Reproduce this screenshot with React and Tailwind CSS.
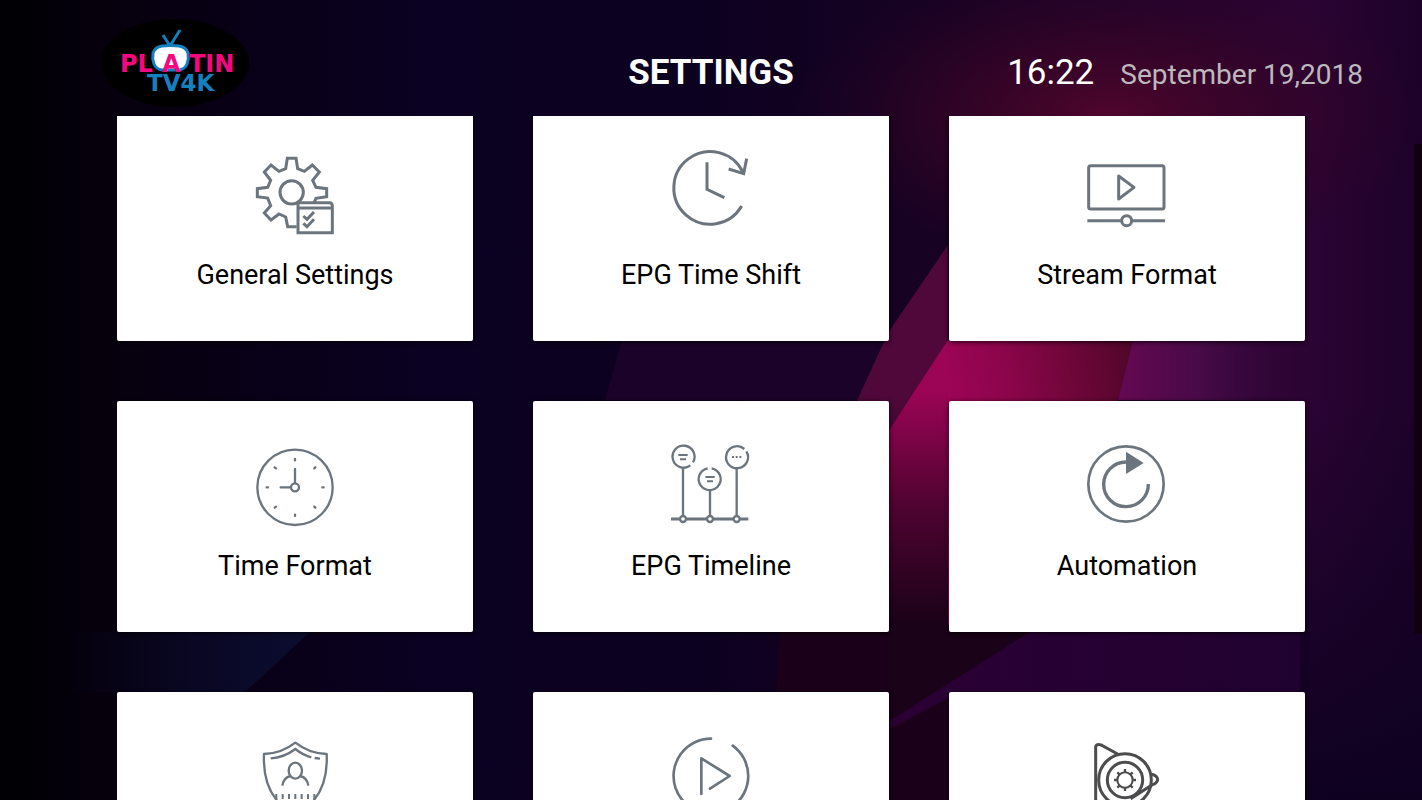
import React from 'react';

const GeneralIcon = () => (
  <>
    <path d="M222 188 L228 175 L260 170 V146 L228 142 L218 121 L238 96 L217 75 L193 94 L173 86 L168 55 H142 L137 86 L117 94 L93 75 L73 96 L92 121 L83 142 L52 146 V170 L83 174 L92 197 L73 219 L93 240 L117 222 L137 231 L143 260 H170" />
    <circle cx="155" cy="157" r="35" />
    <path d="M174 278 V188 H268 Q277 188 277 198 V278 Z M174 204 H277" fill="#fff" />
    <path d="M190 228 L201 238 L222 216 M190 250 L201 260 L222 238" />
  </>
);

const TimeShiftIcon = () => (
  <>
    <path d="M264 112 A109 109 0 1 0 260 213" />
    <path d="M221 102 L266 116 L275 71" />
    <path d="M156 82 V163 L208 188" />
  </>
);

const StreamIcon = () => (
  <>
    <rect x="56" y="77" width="226" height="130" rx="6" />
    <path d="M146 108 V177 L192 142 Z" strokeLinejoin="round" />
    <path d="M52 242 H153 M186 242 H285" />
    <circle cx="170" cy="242" r="15" />
  </>
);

const ClockIcon = () => (
  <>
    <circle cx="165" cy="157" r="113" strokeWidth="7" />
    <circle cx="165" cy="157" r="12" strokeWidth="7" />
    <path
      strokeWidth="7"
      strokeLinecap="round"
      d="M165 102 V144 M122 157 H152 M165 72 V76 M165 239 V243 M80 157 H84 M247 157 H251 M104 97 L108 100 M223 100 L226 97 M104 218 L108 215 M223 215 L226 218"
    />
  </>
);

const TimelineIcon = () => (
  <>
    <path strokeWidth="7" d="M114 97 A33 33 0 1 0 106 106" />
    <path strokeWidth="7" d="M170 115 A33 33 0 1 1 158 115" />
    <path strokeWidth="7" d="M268 57 A33 33 0 1 0 274 64" />
    <path strokeWidth="7" d="M84 114 V257 M165 181 V257 M245 114 V257" />
    <path d="M48 267 H74 M94 267 H155 M175 267 H235 M255 267 H280" />
    <circle cx="84" cy="267" r="9" strokeWidth="7" />
    <circle cx="165" cy="267" r="9" strokeWidth="7" />
    <circle cx="245" cy="267" r="9" strokeWidth="7" />
    <path strokeWidth="6" d="M70 75 H98 M75 88 H93 M151 141 H179 M156 154 H174" />
    <path strokeWidth="6" d="M231 81 H237 M242 81 H248 M253 81 H259" />
  </>
);

const AutomationIcon = () => (
  <>
    <circle cx="168" cy="162" r="113" strokeWidth="8" />
    <path strokeWidth="10" d="M235 162 A67 67 0 1 1 168 96" />
    <path d="M168 65 L221 99 L168 132 Z" fill="currentColor" stroke="none" />
  </>
);

const ParentalIcon = () => (
  <>
    <path
      strokeWidth="7"
      strokeLinejoin="round"
      d="M166 68 Q208 101 260 102 Q264 190 222 240 Q200 265 166 280 Q132 265 110 240 Q68 190 72 102 Q124 101 166 68 Z"
    />
    <path strokeWidth="7" d="M92 115 Q132 113 166 87 Q187 104 214 112 M224 114 L240 116" />
    <ellipse cx="166" cy="152" rx="20" ry="24" strokeWidth="7" />
    <path strokeWidth="7" d="M127 197 Q130 173 152 168 M180 168 Q202 173 205 197" />
    <path strokeWidth="6" d="M109 222 V237 M128 222 V237 M147 222 V237 M166 222 V237 M185 222 V237 M204 222 V237 M223 222 V237" />
  </>
);

const PlayerIcon = () => (
  <g strokeLinecap="round" strokeWidth="8">
    <path d="M168 56 A112 112 0 1 0 233 77" />
    <path d="M139 222 V115 L224 168 L165 206" strokeLinejoin="round" />
  </g>
);

const ExternalPlayerIcon = () => (
  <g className="text-[#4c4c4e]" stroke="currentColor">
    <path d="M77 290 V80 Q80 71 93 75 L143 102" />
    <circle cx="165" cy="180" r="79" />
    <circle cx="165" cy="180" r="53" />
    <circle cx="165" cy="180" r="23" strokeWidth="6" />
    <path
      strokeWidth="7"
      d="M165 157 V147 M165 203 V213 M142 180 H132 M188 180 H198 M149 164 L142 157 M181 164 L188 157 M149 196 L142 203 M181 196 L188 203"
    />
    <path d="M243 163 Q262 166 263 179 Q261 190 247 194 L182 236" />
  </g>
);

const tiles = [
  { id: 'general', label: 'General Settings', viewBox: '0 0 330 330', Icon: GeneralIcon },
  { id: 'shift', label: 'EPG Time Shift', viewBox: '3 15 330 330', Icon: TimeShiftIcon },
  { id: 'stream', label: 'Stream Format', viewBox: '6 0 330 330', Icon: StreamIcon },
  { id: 'time', label: 'Time Format', viewBox: '0 -12 330 330', Icon: ClockIcon },
  { id: 'timeline', label: 'EPG Timeline', viewBox: '3 3 330 330', Icon: TimelineIcon },
  { id: 'automation', label: 'Automation', viewBox: '6 3 330 330', Icon: AutomationIcon },
  { id: 'parental', ariaLabel: 'Parental Control', viewBox: '0 6 330 330', Icon: ParentalIcon },
  { id: 'player', ariaLabel: 'Player Selection', viewBox: '3 6 330 330', Icon: PlayerIcon },
  { id: 'external', ariaLabel: 'External Players', viewBox: '6 6 330 330', Icon: ExternalPlayerIcon },
];

function Logo() {
  return (
    <svg viewBox="10 9 150 88" className="ml-[41px] h-[88px] w-[150px]" role="img" aria-label="Platin TV4K">
      <ellipse cx="85" cy="53" rx="74" ry="44" fill="#000" />
      <path d="M73 25 L80 36 L90 20" fill="none" stroke="#1580c0" strokeWidth="3" />
      <path d="M72 36 Q80 35 89 36 Q96 37 98 43 Q99 49 97 54 Q95 59 89 60 H72 Q66 59 64 54 Q62 49 63 43 Q65 37 72 36 Z" fill="#fff" stroke="#1580c0" strokeWidth="3" />
      <g fontFamily="DejaVu Sans, sans-serif" fontWeight="700" fontSize="24">
        <g fill="#f5087f">
          <text x="30" y="62">PL</text>
          <text x="72" y="62">A</text>
          <text x="99" y="62">TIN</text>
        </g>
        <text x="57" y="81" fontSize="23" fill="#1580c0">TV4K</text>
      </g>
    </svg>
  );
}

function Backdrop() {
  return (
    <svg
      viewBox="0 0 1422 800"
      preserveAspectRatio="none"
      aria-hidden="true"
      className="absolute inset-0 -z-10 h-full w-full"
    >
      <defs>
        <linearGradient id="base">
          <stop offset="0" stopColor="#000003" />
          <stop offset="0.08" stopColor="#06000e" />
          <stop offset="0.3" stopColor="#0b0122" />
          <stop offset="0.5" stopColor="#0d0120" />
          <stop offset="0.68" stopColor="#190224" />
          <stop offset="0.92" stopColor="#2b0433" />
          <stop offset="1" stopColor="#1c0229" />
        </linearGradient>
        <linearGradient id="beam" gradientUnits="userSpaceOnUse" x1="950" y1="380" x2="1130" y2="350">
          <stop offset="0" stopColor="#9c0455" />
          <stop offset="0.3" stopColor="#8c054b" />
          <stop offset="0.65" stopColor="#70063a" />
          <stop offset="1" stopColor="#52062a" />
        </linearGradient>
        <linearGradient id="fade" gradientUnits="userSpaceOnUse" x1="0" y1="390" x2="0" y2="625">
          <stop offset="0" stopColor="#1a0218" stopOpacity="0" />
          <stop offset="0.5" stopColor="#1a0218" stopOpacity="0.6" />
          <stop offset="1" stopColor="#1a0218" />
        </linearGradient>
        <linearGradient id="violet">
          <stop offset="0" stopColor="#650852" />
          <stop offset="0.4" stopColor="#470a48" />
          <stop offset="1" stopColor="#2b0433" stopOpacity="0" />
        </linearGradient>
        <radialGradient id="glow">
          <stop offset="0" stopColor="#50052c" />
          <stop offset="0.5" stopColor="#3c0426" stopOpacity="0.6" />
          <stop offset="1" stopColor="#2c0424" stopOpacity="0" />
        </radialGradient>
        <linearGradient id="floor" gradientUnits="userSpaceOnUse" x1="950" y1="632" x2="1300" y2="632">
          <stop offset="0" stopColor="#2a0034" />
          <stop offset="1" stopColor="#200230" />
        </linearGradient>
        <linearGradient id="dusk" x1="0" y1="0" x2="0" y2="1">
          <stop offset="0" stopColor="#0e0120" stopOpacity="0" />
          <stop offset="1" stopColor="#0e0120" />
        </linearGradient>
        <linearGradient id="blue">
          <stop offset="0" stopColor="#0b0d30" stopOpacity="0" />
          <stop offset="1" stopColor="#0b0d30" />
        </linearGradient>
      </defs>
      <rect width="1422" height="800" fill="url(#base)" />
      <ellipse cx="1110" cy="115" rx="320" ry="150" fill="url(#glow)" />
      <path d="M622 340 H900 V400 H605 Z" fill="#1b0229" />
      <path d="M60 632 H310 L245 692 H60 Z" fill="url(#blue)" />
      <path d="M780 632 H960 V800 H770 Z" fill="#1a0119" />
      <path d="M948 245 L888 333 L855 405 H888 V432 L948 345 Z" fill="#50083a" />
      <path d="M948 340 H1133 L1118 400 L948 632 H888 V432 Z" fill="url(#beam)" />
      <path d="M888 390 H948 V632 H888 Z" fill="url(#fade)" />
      <path d="M1133 340 H1330 V400 H1118 Z" fill="url(#violet)" />
      <path d="M888 625 H1110 L948 692 L888 730 Z" fill="#1a0218" />
      <path d="M1030 632 H1310 V692 H960 L888 730 V722 Z" fill="url(#floor)" />
      <rect x="1300" y="400" width="122" height="400" fill="url(#dusk)" />
      <rect x="1414" y="144" width="8" height="490" fill="#11010f" />
    </svg>
  );
}

function Tile({ label, ariaLabel, viewBox, Icon }) {
  return (
    <button
      type="button"
      aria-label={ariaLabel}
      className="flex h-[231px] flex-col items-center rounded-xs bg-white pt-[30px] shadow-[0_1px_5px_rgba(0,0,0,0.8)]"
    >
      <svg viewBox={viewBox} fill="none" stroke="currentColor" strokeWidth="9" aria-hidden="true" className="size-[110px] shrink-0 text-[#6c757d]">
        <Icon />
      </svg>
      {label && <span className="text-[27px] leading-[50px] text-black">{label}</span>}
    </button>
  );
}

export default function App() {
  return (
    <div className="relative isolate flex h-screen flex-col overflow-hidden bg-black font-[Roboto,sans-serif]">
      <Backdrop />

      <header className="grid h-[116px] shrink-0 grid-cols-[1fr_auto_1fr] items-center px-[59px] pt-2.5">
        <Logo />
        <h1 className="pt-5 text-[35px] font-bold text-white">SETTINGS</h1>
        <div className="flex items-baseline justify-end gap-[26px] pt-5">
          <time className="text-[35px] text-white">16:22</time>
          <time dateTime="2018-09-19" className="text-[28px] text-[#bdb8bd]">September 19,2018</time>
        </div>
      </header>

      <main className="min-h-0 flex-1 overflow-y-auto px-[117px] [scrollbar-width:none]">
        {/* first row sits slightly under the header, as if scrolled */}
        <div className="-mt-1.5 grid grid-cols-3 gap-[60px]">
          {tiles.map(({ id, ...tile }) => (
            <Tile key={id} {...tile} />
          ))}
        </div>
      </main>
    </div>
  );
}
